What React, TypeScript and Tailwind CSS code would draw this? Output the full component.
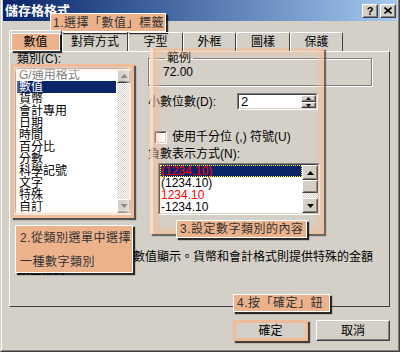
import React from "react";

const FONT = "font-['Liberation_Sans','Noto_Sans_CJK_TC',sans-serif]";

const CATEGORIES = [
  "G/通用格式",
  "數值",
  "貨幣",
  "會計專用",
  "日期",
  "時間",
  "百分比",
  "分數",
  "科學記號",
  "文字",
  "特殊",
  "自訂",
];

const NEGATIVES = [
  { label: "(1234.10)", red: true },
  { label: "(1234.10)", red: false },
  { label: "1234.10", red: true },
  { label: "-1234.10", red: false },
];

const TABS = [
  { label: "對齊方式", w: "w-[66px]" },
  { label: "字型", w: "w-[55px]" },
  { label: "外框", w: "w-[53px]" },
  { label: "圖樣", w: "w-[54px]" },
  { label: "保護", w: "w-[53px]" },
];

const Arrow = ({ down = false, dim = false }: { down?: boolean; dim?: boolean }) => (
  <svg width="7" height="4" viewBox="0 0 7 4">
    <polygon
      points={down ? "0,0 7,0 3.5,4" : "3.5,0 7,4 0,4"}
      fill={dim ? "#808080" : "#000"}
    />
  </svg>
);

const Raised = ({ className = "", children }: { className?: string; children?: React.ReactNode }) => (
  <div className={`border border-white border-r-[#404040] border-b-[#404040] bg-[#d4d0c8] ${className}`}>
    <div className="w-full h-full flex items-center justify-center border border-[#d4d0c8] border-r-[#808080] border-b-[#808080]">
      {children}
    </div>
  </div>
);

const Sunken = ({ className = "", children }: { className?: string; children?: React.ReactNode }) => (
  <div className={`border border-[#808080] border-r-white border-b-white ${className}`}>
    <div className="w-full h-full flex border border-[#404040] border-r-[#d4d0c8] border-b-[#d4d0c8] bg-white">
      {children}
    </div>
  </div>
);

const Callout = ({ className = "", children }: { className?: string; children?: React.ReactNode }) => (
  <div
    className={`absolute bg-[#ebb28c] border border-white shadow-[2px_2px_1px_rgba(0,0,0,0.8)] text-[#333] text-[12px] leading-[14px] tracking-[0.5px] ${className}`}
  >
    {children}
  </div>
);

const App = () => {
  return (
    <div className={`relative w-[400px] h-[352px] overflow-hidden bg-[#d4d0c8] text-black text-[12px] ${FONT}`}>
      <div className="w-full h-full flex flex-col border-x border-b border-[#404040] border-l-[#d4d0c8]">
        <div className="flex-1 flex flex-col border-x border-b border-[#808080] border-l-white px-[1px]">
          {/* title bar */}
          <div className="h-[21px] flex items-center justify-between bg-gradient-to-r from-[#0a246a] to-[#a6caf0] pl-[2px] pr-[1px]">
            <div className="text-white font-bold text-[13px] leading-[13px]">儲存格格式</div>
            <div className="flex gap-[2px]">
              <Raised className="w-[16px] h-[14px]">
                <span className="text-[11px] leading-[10px] font-bold">?</span>
              </Raised>
              <Raised className="w-[16px] h-[14px]">
                <svg width="8" height="7" viewBox="0 0 8 7">
                  <path d="M0.5 0.5 L7.5 6.5 M7.5 0.5 L0.5 6.5" stroke="#000" strokeWidth="1.6" />
                </svg>
              </Raised>
            </div>
          </div>

          {/* body */}
          <div className="flex flex-col pl-[6px] pr-[7px] pt-[9px]">
            {/* tabs */}
            <div className="flex items-end h-[21px] relative z-10">
              <div className="w-[53px] h-[21px] border-t border-l border-white border-r border-r-[#404040] rounded-t-[2px] bg-[#d4d0c8] pt-[2px] pl-[1px]">
                <div className="w-[49px] h-[18px] bg-[#ebb28c] border border-white shadow-[2px_2px_1px_rgba(0,0,0,0.8)] flex items-center justify-center leading-[14px]">
                  數值
                </div>
              </div>
              {TABS.map((t) => (
                <div
                  key={t.label}
                  className={`${t.w} h-[19px] border-t border-l border-white border-r border-r-[#404040] rounded-t-[2px] flex items-center justify-center leading-[14px]`}
                >
                  {t.label}
                </div>
              ))}
            </div>

            {/* panel */}
            <div className="h-[256px] border border-white border-r-[#404040] border-b-[#404040] flex flex-col">
              <div className="flex">
                {/* category column */}
                <div className="ml-[4px] w-[119px] flex flex-col">
                  <div className="h-[15px] leading-[15px] pl-[3px]">類別(C):</div>
                  <Sunken className="h-[148px]">
                    <div className="flex-1 flex flex-col">
                      {CATEGORIES.map((c, i) => (
                        <div
                          key={c}
                          className={`h-[12px] leading-[12px] mx-[1px] px-[2px] whitespace-nowrap ${
                            i === 1 ? "bg-[#0a246a] text-white" : i === 0 ? "text-[#777]" : ""
                          }`}
                        >
                          {c}
                        </div>
                      ))}
                    </div>
                    <div className="w-[14px] flex flex-col bg-[repeating-conic-gradient(#ffffff_0%_25%,#d4d0c8_0%_50%)] bg-[length:2px_2px]">
                      <Raised className="h-[14px]">
                        <Arrow dim />
                      </Raised>
                      <div className="flex-1" />
                      <Raised className="h-[14px]">
                        <Arrow down dim />
                      </Raised>
                    </div>
                  </Sunken>
                </div>

                {/* right column */}
                <div className="ml-[15px] w-[224px] flex flex-col">
                  <fieldset className="h-[35px] border border-[#808080] shadow-[1px_1px_0_#ffffff,inset_1px_1px_0_#ffffff] pl-[14px] -mt-[1px]">
                    <legend className="ml-[2px] px-[2px] leading-[14px]">範例</legend>
                    <div className="leading-[14px]">72.00</div>
                  </fieldset>

                  <div className="mt-[7px] flex items-center h-[17px]">
                    <div className="w-[89px] leading-[14px]">小數位數(D):</div>
                    <Sunken className="w-[81px] h-[17px]">
                      <div className="flex-1 pl-[2px] leading-[13px] text-[13px]">2</div>
                      <div className="w-[15px] flex flex-col bg-[#d4d0c8]">
                        <Raised className="h-[7px]">
                          <svg width="5" height="3" viewBox="0 0 5 3"><polygon points="2.5,0 5,3 0,3" fill="#000" /></svg>
                        </Raised>
                        <Raised className="h-[6px]">
                          <svg width="5" height="3" viewBox="0 0 5 3"><polygon points="0,0 5,0 2.5,3" fill="#000" /></svg>
                        </Raised>
                      </div>
                    </Sunken>
                  </div>

                  <div className="mt-[20px] flex items-center h-[14px]">
                    <Sunken className="ml-[6px] w-[13px] h-[13px]" />
                    <div className="ml-[5px] leading-[14px]">使用千分位 (,) 符號(U)</div>
                  </div>

                  <div className="mt-[3px] h-[14px] leading-[14px]">負數表示方式(N):</div>

                  <Sunken className="mt-[2px] ml-[10px] w-[162px] h-[52px]">
                    <div className="flex-1 flex flex-col">
                      {NEGATIVES.map((n, i) => (
                        <div
                          key={i}
                          className={`h-[12px] leading-[12px] px-[1px] ${n.red ? "text-[#ff0000]" : ""} ${
                            i === 0 ? "bg-[#0a246a] outline-1 outline-dotted outline-[#ffff00] -outline-offset-1" : ""
                          }`}
                        >
                          {n.label}
                        </div>
                      ))}
                    </div>
                    <div className="w-[16px] flex flex-col bg-[repeating-conic-gradient(#ffffff_0%_25%,#d4d0c8_0%_50%)] bg-[length:2px_2px]">
                      <Raised className="h-[15px]">
                        <Arrow />
                      </Raised>
                      <Raised className="h-[13px]" />
                      <div className="flex-1" />
                      <Raised className="h-[15px]">
                        <Arrow down />
                      </Raised>
                    </div>
                  </Sunken>
                </div>
              </div>

              <p className="mt-[36px] pl-[7px] indent-[20px] leading-[13px] whitespace-nowrap">
                數值格式用於一般數值顯示。貨幣和會計格式則提供特殊的金額
                <br />
                數值格式。
              </p>
            </div>

            {/* buttons */}
            <div className="mt-[13px] flex justify-end gap-[8px]">
              <div className="w-[75px] h-[21px] border-[3px] border-[#efbb98] shadow-[2px_2px_1px_rgba(0,0,0,0.7)] flex items-center justify-center leading-[14px]">
                確定
              </div>
              <Raised className="w-[74px] h-[21px]">
                <span className="leading-[14px]">取消</span>
              </Raised>
            </div>
          </div>
        </div>
      </div>

      {/* highlight frames */}
      <div className="absolute left-[11px] top-[64px] w-[123px] h-[154px] border-[3px] border-[#efbb98] shadow-[inset_0_0_5px_3px_rgba(255,235,220,0.9),2px_2px_1px_rgba(0,0,0,0.6)]" />
      <div className="absolute left-[150px] top-[48px] w-[174px] h-[186px] border-l-[3px] border-l-[rgba(250,225,205,0.85)] shadow-[inset_0_0_8px_4px_rgba(244,188,150,0.85),2px_2px_1px_rgba(0,0,0,0.5)]" />

      {/* callouts */}
      <Callout className="left-[50px] top-[13px] w-[116px] h-[19px] pl-[2px] flex items-center">1.選擇「數值」標籤</Callout>
      <Callout className="left-[15px] top-[225px] w-[118px] h-[48px] pl-[4px] pt-[5px] flex flex-col gap-[10px]">
        <span>2.從類別選單中選擇</span>
        <span>一種數字類別</span>
      </Callout>
      <Callout className="left-[176px] top-[220px] w-[131px] h-[18px] pl-[3px] flex items-center">3.設定數字類別的內容</Callout>
      <Callout className="left-[233px] top-[294px] w-[97px] h-[18px] pl-[3px] flex items-center">4.按「確定」鈕</Callout>
    </div>
  );
};

export default App;
